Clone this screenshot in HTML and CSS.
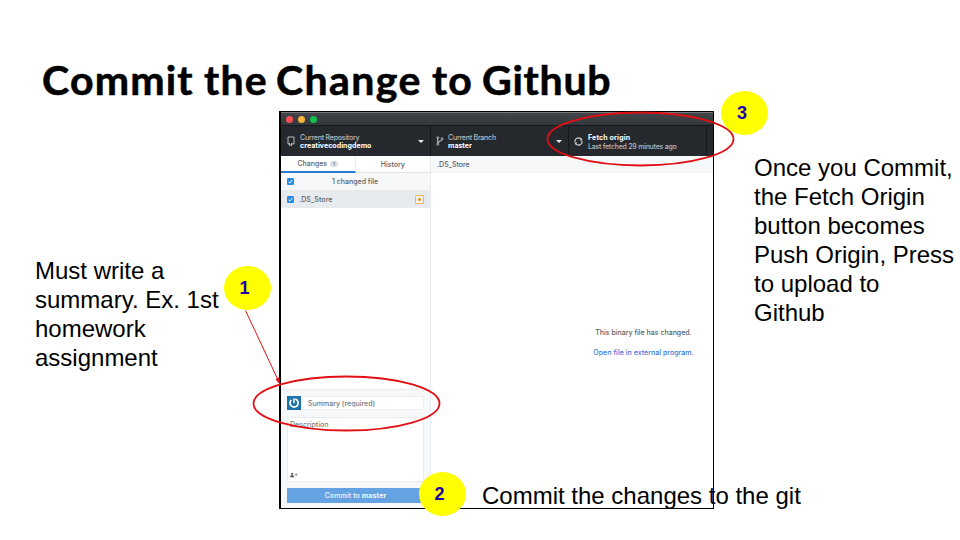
FILE: index.html
```
<!DOCTYPE html>
<html lang="en">
<head>
<meta charset="utf-8">
<title>Commit the Change to Github</title>
<link rel="stylesheet" href="styles.css">
</head>
<body>
<div class="slide">
  <header class="heading"><h1>Commit the <span class="w-change">Change</span> to <span class="w-github">Github</span></h1></header>
  <main class="content">
    <p class="note note-left">Must write a<br>summary. Ex. 1st<br>homework<br>assignment</p>
    <section class="window">
      <div class="titlebar"><i class="dot red"></i><i class="dot amber"></i><i class="dot green"></i></div>
      <div class="toolbar">
        <div class="tool repo">
          <svg class="repo-icon" viewBox="0 0 8 10"><path d="M2.6 8H1V1h6v7H5M2.5 7v2.8l1-.8 1 .8V7" fill="none" stroke="#c9ccd0" stroke-width=".9"/></svg>
          <div class="label"><span class="t-repo">Current Repository</span><b class="t-demo">creativecodingdemo</b></div>
          <i class="caret"></i>
        </div>
        <div class="tool branch">
          <svg class="branch-icon" viewBox="0 0 8 10"><path d="M1.8 2v6M6.2 3.4C6.2 5.5 2 4.7 1.8 7" fill="none" stroke="#c9ccd0"/><g fill="#25292e" stroke="#c9ccd0" stroke-width=".8"><circle cx="1.8" cy="1.7" r="1"/><circle cx="6.1" cy="2.7" r="1"/><circle cx="1.8" cy="8.2" r="1"/></g></svg>
          <div class="label"><span class="t-branch">Current Branch</span><b class="t-master">master</b></div>
          <i class="caret"></i>
        </div>
        <div class="tool fetch">
          <svg class="sync-icon" viewBox="0 0 8 8"><path d="M.9 4.6A3.1 3.1 0 0 1 6.2 1.8M7.1 3.4A3.1 3.1 0 0 1 1.8 6.2" fill="none" stroke="#d5d7da"/><path d="M7.2.8v2.4H4.8zM.8 7.2V4.8h2.4z" fill="#d5d7da"/></svg>
          <div class="label"><b class="t-fetch">Fetch origin</b><span class="t-last">Last fetched 29 minutes ago</span></div>
        </div>
      </div>
      <div class="panes">
        <aside class="sidebar">
          <div class="tabs"><div class="tab active"><span class="t-changes">Changes</span><em>1</em></div><div class="tab"><span class="t-history">History</span></div></div>
          <div class="row summary-row"><svg class="check" viewBox="0 0 7 7"><rect width="7" height="7" rx="1.2" fill="#278bea"/><path d="M1.6 3.7l1.3 1.4 2.5-3.2" fill="none" stroke="#fff" stroke-width=".9"/></svg><span class="t-count">1 changed file</span></div>
          <div class="row file-row"><svg class="check" viewBox="0 0 7 7"><rect width="7" height="7" rx="1.2" fill="#278bea"/><path d="M1.6 3.7l1.3 1.4 2.5-3.2" fill="none" stroke="#fff" stroke-width=".9"/></svg><span class="t-file">.DS_Store</span><i class="modified"></i></div>
          <div class="list"></div>
          <div class="commit">
            <div class="summary">
              <svg class="avatar" viewBox="0 0 14 14"><rect width="14" height="14" fill="#1d72a8"/><path d="M4.3 3.9a4.1 4.1 0 1 0 4-.9" fill="none" stroke="#fff" stroke-width="1.7"/><path d="M7 2.3v4.9" stroke="#fff" stroke-width="1.5"/></svg>
              <div class="input"><span class="t-sum">Summary (required)</span></div>
            </div>
            <div class="description"><span class="t-desc">Description</span>
              <svg class="coauthor" viewBox="0 0 8 6"><circle cx="2.1" cy="1.8" r="1" fill="#4c5157"/><path d="M.4 5c0-2.4 3.4-2.4 3.4 0zM4.6 2.7h3M6.1 1.2v3" fill="#4c5157" stroke="#4c5157" stroke-width=".5"/></svg>
            </div>
            <div class="button"><span class="t-commit">Commit to <b>master</b></span></div>
          </div>
        </aside>
        <div class="detail">
          <div class="path"><span class="t-path">.DS_Store</span></div>
          <div class="message"><span class="t-binary">This binary file has changed.</span><span class="t-open">Open file in external program.</span></div>
        </div>
      </div>
    </section>
    <p class="note note-right">Once you Commit,<br>the Fetch Origin<br>button becomes<br>Push Origin, Press<br>to upload to<br>Github</p>
  </main>
  <svg class="marks" viewBox="0 0 960 540">
    <ellipse cx="640.5" cy="139" rx="93" ry="26.5"/>
    <ellipse cx="346.5" cy="403.5" rx="93" ry="27"/>
    <path class="arrow" d="M245.5 310.5L278.5 381"/>
    <path class="head" d="M279.8 384l-4-4.7 3.4-1.7z"/>
  </svg>
  <div class="badge one">1</div>
  <div class="badge two">2</div>
  <div class="badge three">3</div>
  <p class="note note-bottom">Commit the changes to the git</p>
</div>
</body>
</html>
```
FILE: styles.css
```
* { box-sizing: border-box; }
body { margin: 0; background: #fff; }
.slide { position: relative; width: 960px; height: 540px; overflow: hidden; background: #fff; font-family: "Liberation Sans", Arial, sans-serif; color: #000; }
.heading { height: 111px; padding: 56px 0 0 42px; }
h1 { margin: 0; font: 700 41px/48px Lato, sans-serif; letter-spacing: 1.2px; word-spacing: -1px; white-space: nowrap; -webkit-text-stroke: .6px #000; }
.w-change { letter-spacing: 1.4px; margin-left: -2px; }
.w-github { letter-spacing: .7px; margin-left: -1px; }
.content { display: grid; grid-template-columns: 279px 435px 246px; height: 398px; }
.note { margin: 0; font-size: 24px; line-height: 29px; white-space: nowrap; }
.note-left { padding: 145px 0 0 35px; }
.note-right { padding: 42px 0 0 40px; }
.note-bottom { position: absolute; left: 482px; top: 481px; }

.window { display: flex; flex-direction: column; height: 398px; border: 1px solid #000; border-left-width: 2px; font: 500 7px/9px Inter, sans-serif; color: #5a5f65; }
.window span, .window b { white-space: nowrap; }
.titlebar { height: 13px; display: flex; align-items: center; gap: 5px; padding: 1px 0 0 5px; background: linear-gradient(#414449, #33373c); border-top: 1px solid #777; }
.dot { width: 7px; height: 7px; border-radius: 50%; }
.red { background: #fb4e55; }
.amber { background: #f6b43c; }
.green { background: #12bf4d; }
.toolbar { height: 31px; display: flex; background: #25292e; border-top: 1px solid #15181b; color: #b9bcc0; }
.tool { display: flex; align-items: center; height: 30px; border-right: 1px solid #15181b; }
.repo { width: 150px; padding-left: 6px; }
.branch { width: 138px; padding-left: 5px; }
.fetch { width: 138px; padding-left: 5px; }
.repo-icon, .branch-icon { width: 8px; height: 10px; }
.sync-icon { width: 9px; height: 9px; }
.label { display: flex; flex-direction: column; line-height: 8px; margin-left: 5px; padding-top: 1px; }
.branch .label { margin-left: 4px; }
.fetch .label { margin-left: 5px; line-height: 9px; }
.label b { color: #fff; }
.t-repo, .t-branch { letter-spacing: -.22px; }
.t-last { letter-spacing: -.24px; }
.t-demo { letter-spacing: .05px; }
.t-fetch { letter-spacing: .15px; }
.caret { margin-left: auto; margin-right: 6px; border: 3px solid transparent; border-top-color: #e8e9ea; border-bottom: 0; }
.panes { display: flex; flex: 1; min-height: 0; }
.sidebar { width: 150px; display: flex; flex-direction: column; border-right: 1px solid #e9ebee; }
.tabs { display: flex; height: 17px; }
.tab { width: 50%; display: flex; align-items: center; justify-content: center; border-bottom: 1px solid #e1e4e8; }
.active { border-bottom: 2px solid #2b7bd5; border-right: 1px solid #e9ebee; }
.tab em { width: 8px; height: 6px; margin-left: 3px; border-radius: 3px; background: #dde0e3; font: 5px/6px Inter, sans-serif; text-align: center; }
.row { display: flex; align-items: center; padding: 0 6px; height: 17px; }
.summary-row { background: #f6f8fa; }
.file-row { height: 18px; background: #e8ebee; }
.check { width: 7px; height: 7px; }
.t-count { margin-left: 38px; }
.t-file { margin-left: 5px; letter-spacing: .1px; }
.modified { width: 9px; height: 9px; margin-left: auto; border: 1px solid #e5b767; border-radius: 1px; background: radial-gradient(circle, #dba03c 0 1.2px, #fbf1de 1.8px); }
.list { flex: 1; }
.commit { height: 119px; padding: 6px 6px 0 6px; background: #f6f8fa; border-top: 1px solid #eaecef; }
.summary { display: flex; gap: 1px; height: 14px; }
.avatar { width: 14px; height: 14px; }
.input { flex: 1; padding: 2px 0 0 5px; border: 1px solid #eceef0; background: #fff; color: #74787d; }
.description { height: 65px; margin-top: 7px; padding: 2px 2px 3px; display: flex; flex-direction: column; justify-content: space-between; border: 1px solid #e9ebed; background: #fff; color: #7c8084; }
.coauthor { width: 8px; height: 6px; }
.button { height: 15px; margin-top: 6px; line-height: 15px; background: #65a2e2; color: #f4f8fd; text-align: center; }
.t-commit { letter-spacing: .1px; }
.detail { flex: 1; display: flex; flex-direction: column; }
.path { height: 17px; padding: 4px 0 0 6px; background: #f6f8fa; border-bottom: 1px solid #eff1f3; }
.message { flex: 1; display: flex; flex-direction: column; align-items: center; justify-content: center; gap: 11px; padding: 4px 0 0 143px; }
.t-open { color: #3a75d6; letter-spacing: .03px; }

.marks { position: absolute; inset: 0; width: 960px; height: 540px; fill: none; stroke: #e10f14; stroke-width: 1.8; }
.marks .arrow { stroke-width: 1; }
.marks .head { fill: #e10f14; stroke-width: .5; }
.badge { position: absolute; width: 47px; height: 44px; border-radius: 50%; background: #ff0; color: #1a00a8; font-weight: 700; font-size: 18px; line-height: 44px; padding-right: 5px; text-align: center; }
.one { left: 223.5px; top: 266px; }
.two { left: 418.5px; top: 472px; }
.three { left: 721px; top: 91px; }
```
